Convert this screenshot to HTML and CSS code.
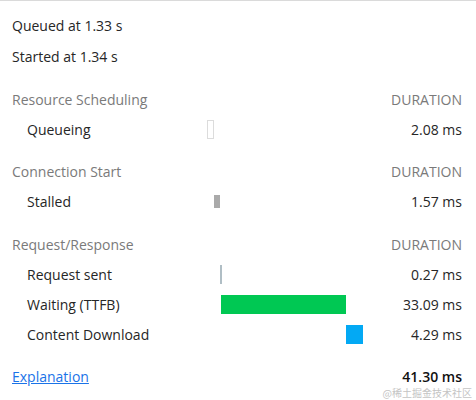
FILE: index.html
```html
<!DOCTYPE html>
<html>
<head>
<meta charset="utf-8">
<link rel="stylesheet" href="styles.css">
</head>
<body>
<div class="timing">
  <div class="info">
    <div class="info-row">Queued at 1.33 s</div>
    <div class="info-row">Started at 1.34 s</div>
  </div>

  <div class="section">
    <div class="sec-head"><span>Resource Scheduling</span><span class="dur">DURATION</span></div>
    <div class="row">
      <span class="label">Queueing</span>
      <span class="track"><span class="bar queueing" style="margin-left:0px;width:7px"></span></span>
      <span class="value">2.08 ms</span>
    </div>
  </div>

  <div class="section">
    <div class="sec-head"><span>Connection Start</span><span class="dur">DURATION</span></div>
    <div class="row">
      <span class="label">Stalled</span>
      <span class="track"><span class="bar stalled" style="margin-left:7px;width:6px"></span></span>
      <span class="value">1.57 ms</span>
    </div>
  </div>

  <div class="section">
    <div class="sec-head"><span>Request/Response</span><span class="dur">DURATION</span></div>
    <div class="row">
      <span class="label">Request sent</span>
      <span class="track"><span class="bar sending" style="margin-left:13px;width:2px"></span></span>
      <span class="value">0.27 ms</span>
    </div>
    <div class="row">
      <span class="label">Waiting (TTFB)</span>
      <span class="track"><span class="bar waiting" style="margin-left:14px;width:125px"></span></span>
      <span class="value">33.09 ms</span>
    </div>
    <div class="row">
      <span class="label">Content Download</span>
      <span class="track"><span class="bar download" style="margin-left:139px;width:17px"></span></span>
      <span class="value">4.29 ms</span>
    </div>
  </div>

  <div class="footer">
    <a class="link" href="#">Explanation</a>
    <span class="total">41.30 ms</span>
  </div>

  <div class="watermark">@稀土掘金技术社区</div>
</div>
</body>
</html>
```

FILE: styles.css
```css
html, body {
  margin: 0;
  padding: 0;
  background: #fff;
}

body {
  font-family: "Open Sans", "Noto Sans", "Noto Sans CJK SC", sans-serif;
  font-size: 14px;
  color: #262626;
}

.timing {
  position: relative;
  width: 476px;
  height: 400px;
  box-sizing: border-box;
  border-top: 1px solid #dadada;
  padding: 8.5px 14px 0 12px;
  overflow: hidden;
}

.info-row {
  height: 31px;
  display: flex;
  align-items: center;
}

.section {
  margin-top: 12.5px;
}

.sec-head {
  height: 30px;
  display: flex;
  align-items: center;
  justify-content: space-between;
  color: #7a7a7a;
}

.row {
  height: 30px;
  display: grid;
  grid-template-columns: 195px 156px 1fr;
  align-items: center;
}

.label {
  padding-left: 15px;
}

.track {
  display: flex;
  align-items: center;
  height: 30px;
}

.value {
  text-align: right;
}

.bar {
  display: block;
  height: 19px;
  box-sizing: border-box;
  flex: none;
}

.bar.queueing {
  border: 1px solid #dcdcdc;
  background: #fff;
}

.bar.stalled {
  height: 13px;
  background: #aaaaaa;
}

.bar.sending {
  background: #b0bec5;
}

.bar.waiting {
  background: #00c853;
}

.bar.download {
  background: #03a9f4;
}

.footer {
  margin-top: 12.5px;
  height: 30px;
  display: flex;
  align-items: center;
  justify-content: space-between;
  line-height: 16px;
}

.link {
  color: #1a73e8;
  text-decoration: underline;
}

.total {
  font-weight: 600;
  color: #111;
}

.watermark {
  position: absolute;
  right: 4px;
  bottom: 2px;
  font-family: "Noto Sans CJK SC", sans-serif;
  font-size: 10px;
  line-height: 10px;
  color: #c4c4c4;
}
```
